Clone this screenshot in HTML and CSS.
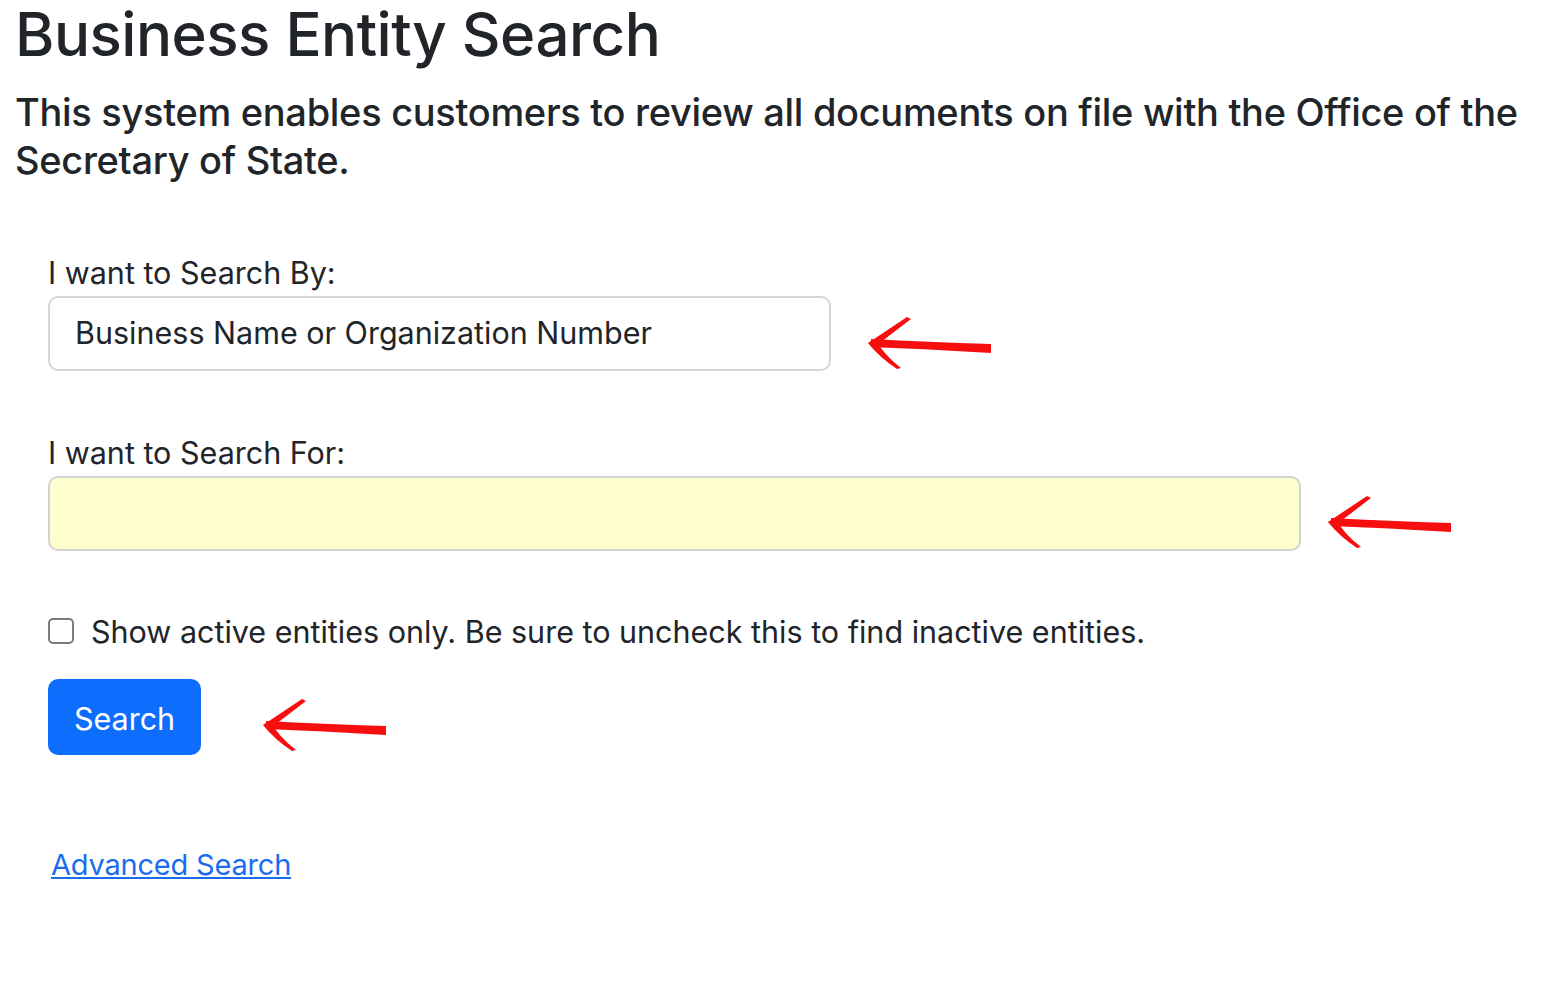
FILE: index.html
```html
<!DOCTYPE html>
<html lang="en">
<head>
  <meta charset="UTF-8">
  <title>Business Entity Search</title>
  <link rel="stylesheet" href="styles.css">
</head>
<body>
  <div class="page">
    <h1>Business Entity Search</h1>
    <p class="intro">This system enables customers to review all documents on file with the Office of the Secretary of State.</p>

    <form class="search-form" onsubmit="return false;">
      <div class="field">
        <label for="searchBy">I want to Search By:</label>
        <div class="field-row">
          <div class="select-box" id="searchBy">Business Name or Organization Number</div>
          <svg class="mark" width="126" height="54" viewBox="0 0 126 54">
            <path d="M1 27 L40 1 L44 3 L10 29 Z" fill="#f70f0f"/>
            <path d="M1 27 L10 25 Q16 38 34 52 L30 53 Q12 41 1 27 Z" fill="#f70f0f"/>
            <path d="M4 23 Q60 26 124 28 L124 37 Q60 33 4 31 Z" fill="#f70f0f"/>
          </svg>
        </div>
      </div>

      <div class="field">
        <label for="searchFor">I want to Search For:</label>
        <div class="field-row">
          <input class="text-box" id="searchFor" type="text">
          <svg class="mark mark-wide" width="126" height="54" viewBox="0 0 126 54">
            <path d="M1 27 L40 1 L44 3 L10 29 Z" fill="#f70f0f"/>
            <path d="M1 27 L10 25 Q16 38 34 52 L30 53 Q12 41 1 27 Z" fill="#f70f0f"/>
            <path d="M4 23 Q60 26 124 28 L124 37 Q60 33 4 31 Z" fill="#f70f0f"/>
          </svg>
        </div>
      </div>

      <div class="check">
        <input type="checkbox" id="activeOnly">
        <label for="activeOnly">Show active entities only. Be sure to uncheck this to find inactive entities.</label>
      </div>

      <div class="field-row">
        <button class="btn" type="submit">Search</button>
        <svg class="mark mark-btn" width="126" height="54" viewBox="0 0 126 54">
          <path d="M1 27 L40 1 L44 3 L10 29 Z" fill="#f70f0f"/>
          <path d="M1 27 L10 25 Q16 38 34 52 L30 53 Q12 41 1 27 Z" fill="#f70f0f"/>
          <path d="M4 23 Q60 26 124 28 L124 37 Q60 33 4 31 Z" fill="#f70f0f"/>
        </svg>
      </div>

      <a class="advanced" href="#">Advanced Search</a>
    </form>
  </div>
</body>
</html>
```

FILE: styles.css
```css
body {
  margin: 0;
  font-family: Inter, "Liberation Sans", sans-serif;
  color: #212529;
  background: #fff;
}
.page {
  padding: 0 15px;
}
h1 {
  margin: 0;
  font-size: 60px;
  font-weight: 500;
  line-height: 68px;
  letter-spacing: -0.5px;
}
.intro {
  margin: 20px 0 0;
  font-size: 38px;
  font-weight: 500;
  line-height: 48px;
  letter-spacing: -0.3px;
}
.search-form {
  padding: 69px 33px 0;
}
.field {
  margin-bottom: 62px;
}
.field + .field {
  margin-bottom: 58px;
}
.field label {
  display: block;
  font-size: 30.5px;
  line-height: 40px;
  margin-bottom: 3px;
}
.field-row {
  display: flex;
  align-items: center;
  gap: 36px;
}
.select-box {
  box-sizing: border-box;
  width: 783px;
  height: 75px;
  padding: 0 25px;
  border: 2px solid #d6d6d6;
  border-radius: 10px;
  font-size: 30.5px;
  line-height: 69px;
}
.text-box {
  box-sizing: border-box;
  width: 1253px;
  height: 75px;
  border: 2px solid #d2d2d2;
  border-radius: 10px;
  background: #fefdcd;
  font-size: 30px;
  padding: 0 26px;
}
.mark {
  margin-top: 18px;
}
.mark-wide {
  margin-left: -10px;
  margin-top: 16px;
}
.mark-btn {
  margin-left: 25px;
  margin-top: 16px;
}
.check {
  display: flex;
  align-items: center;
  gap: 17px;
  margin-bottom: 27px;
}
.check input {
  appearance: none;
  -webkit-appearance: none;
  box-sizing: border-box;
  width: 26px;
  height: 26px;
  margin: 0;
  border: 2px solid #7a7a7a;
  border-radius: 5px;
  background: #fff;
}
.check input:checked {
  background: #0d6efd;
  border-color: #0d6efd;
}
.check label {
  font-size: 30.5px;
  line-height: 40px;
  padding-top: 3px;
}
.btn {
  width: 153px;
  height: 76px;
  border: none;
  border-radius: 10px;
  background: #0d6efd;
  color: #fff;
  font-family: inherit;
  font-size: 30.5px;
  padding-top: 4px;
  cursor: pointer;
}
.advanced {
  display: inline-block;
  margin: 92px 0 0 3px;
  font-size: 29px;
  letter-spacing: -0.2px;
  color: #1a6cef;
}
```
